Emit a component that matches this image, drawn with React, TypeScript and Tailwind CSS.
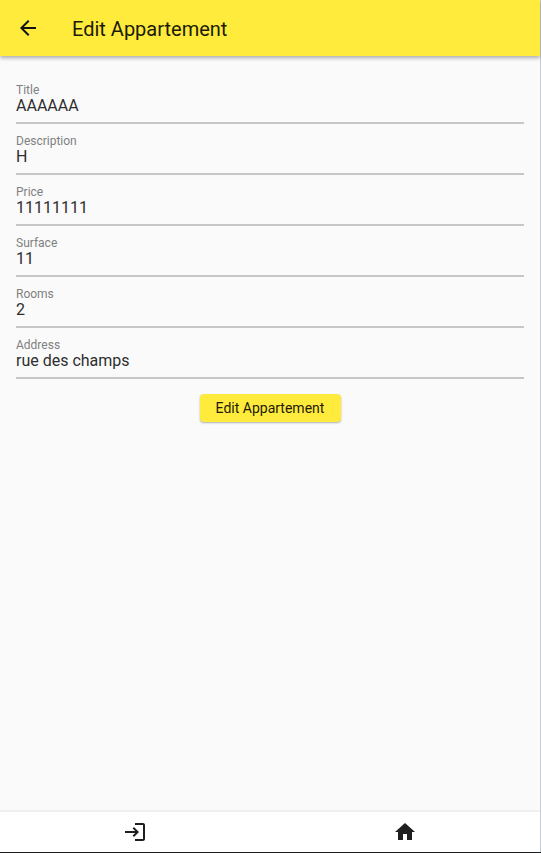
const fields = [
  { label: 'Title', value: 'AAAAAA' },
  { label: 'Description', value: 'H' },
  { label: 'Price', value: '11111111' },
  { label: 'Surface', value: '11' },
  { label: 'Rooms', value: '2' },
  { label: 'Address', value: 'rue des champs' },
];

function Field({ label, value }: { label: string; value: string }) {
  return (
    <div className="flex h-[51px] flex-col border-b-2 border-[#c6c6c6] pt-[9px]">
      <span className="text-xs leading-4 text-[#808080]">{label}</span>
      <span className="text-base leading-4 text-[#2e2e2e]">{value}</span>
    </div>
  );
}

export default function App() {
  return (
    <div className="flex h-[853px] w-[541px] flex-col overflow-hidden border-b border-[#1c1c1c] bg-[#fafafa] font-[Roboto,sans-serif]">
      <div className="flex min-h-0 flex-1 flex-col border-r border-[#c5ccd2]">
        <header className="z-10 flex h-14 shrink-0 items-center bg-[#ffeb3b] px-4 shadow-[0_2px_4px_rgba(0,0,0,0.32)]">
          <svg viewBox="0 0 24 24" className="size-6" fill="#111">
            <path d="M20 11H7.83l5.59-5.59L12 4l-8 8 8 8 1.41-1.41L7.83 13H20v-2z" />
          </svg>
          <h1 className="ml-8 pt-0.5 text-xl leading-6 text-[#1c1a08]">Edit Appartement</h1>
        </header>
        <main className="flex flex-1 flex-col px-4 pt-[17px]">
          {fields.map((f) => (
            <Field key={f.label} label={f.label} value={f.value} />
          ))}
          <button className="mt-[15px] h-7 w-[141px] self-center rounded bg-[#ffeb3b] text-sm leading-7 text-[#1c1a08] shadow-[0_1px_2px_rgba(0,0,0,0.3)]">
            Edit Appartement
          </button>
        </main>
        <nav className="flex h-[42px] shrink-0 border-t-2 border-[#f0f0f0] bg-white">
          <div className="flex flex-1 items-center justify-center">
            <svg viewBox="0 0 24 24" className="size-6" fill="#1f1f1f">
              <path d="M11 7L9.600 8.400l2.600 2.600H2v2h10.200l-2.600 2.600L11 17l5-5-5-5zm9 12h-8v2h8c1.100 0 2-.9 2-2V5c0-1.100-.9-2-2-2h-8v2h8v14z" />
            </svg>
          </div>
          <div className="flex flex-1 items-center justify-center">
            <svg viewBox="0 0 24 24" className="size-6" fill="#1f1f1f">
              <path d="M10 20v-6h4v6h5v-8h3L12 3 2 12h3v8z" />
            </svg>
          </div>
        </nav>
      </div>
    </div>
  );
}
